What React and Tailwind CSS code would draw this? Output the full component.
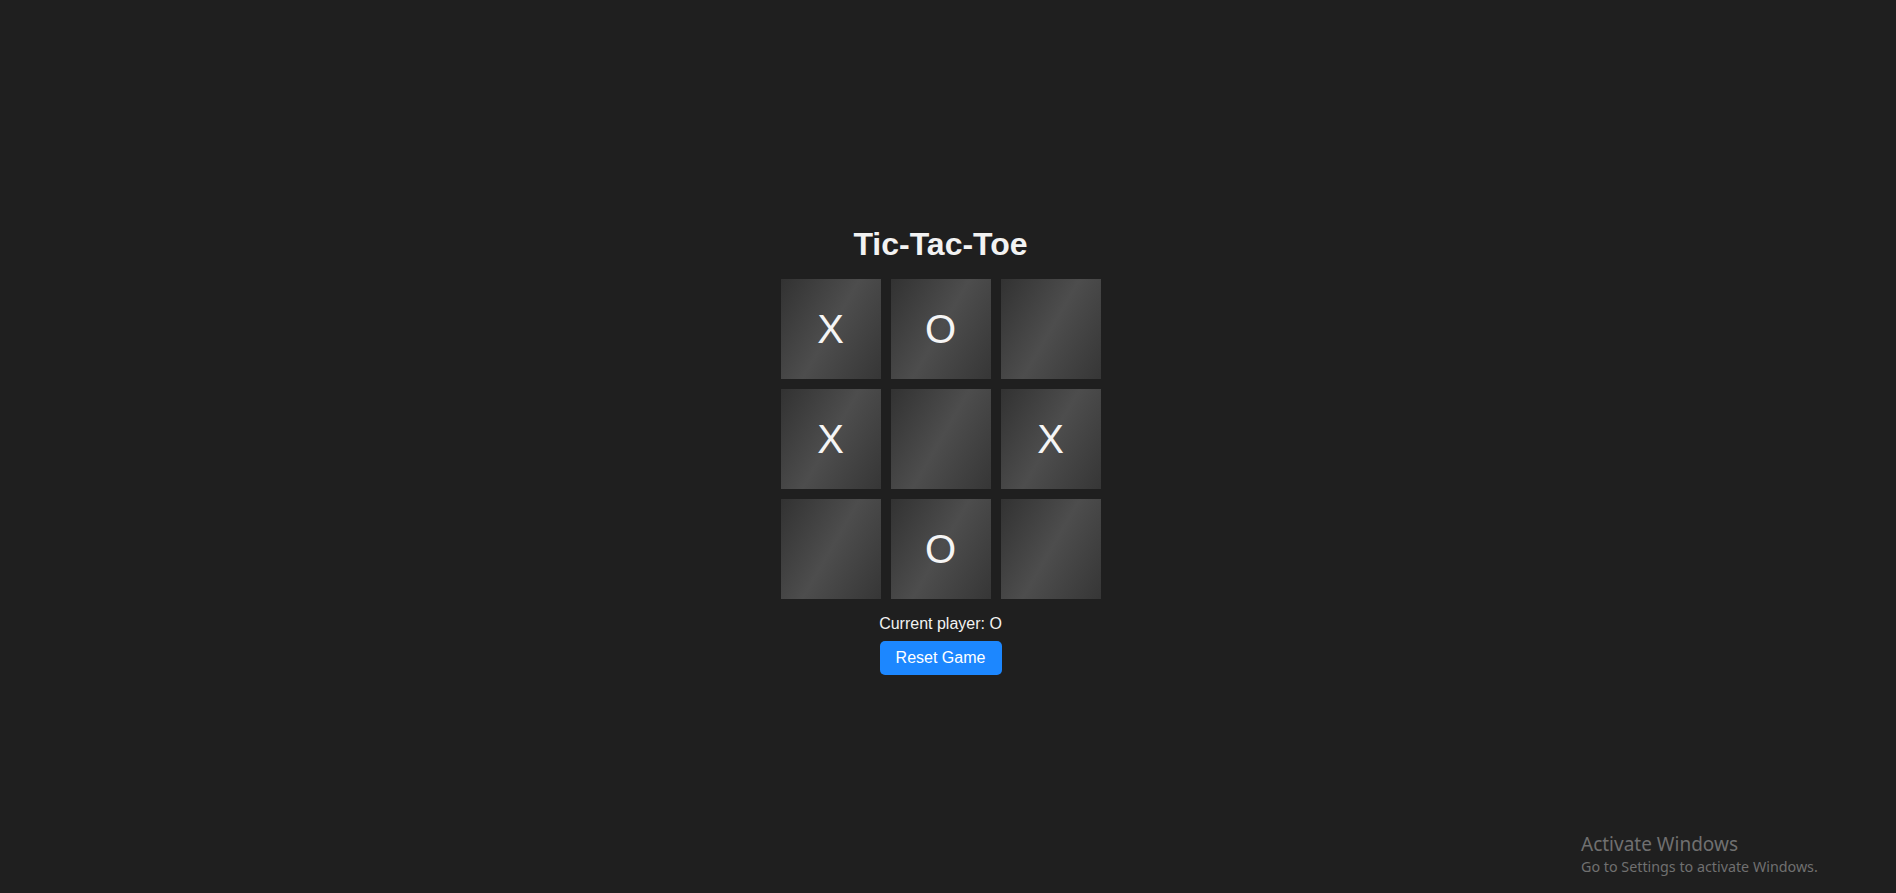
import { useState } from 'react';

const start = ['X', 'O', '', 'X', '', 'X', '', 'O', ''];

export default function App() {
  const [board, setBoard] = useState(start);
  const [player, setPlayer] = useState('O');

  const play = (i) => {
    if (board[i]) return;
    const next = board.slice();
    next[i] = player;
    setBoard(next);
    setPlayer(player === 'X' ? 'O' : 'X');
  };

  const reset = () => {
    setBoard(Array(9).fill(''));
    setPlayer('X');
  };

  return (
    <div className="relative min-h-[893px] w-full bg-[#1f1f1f] font-['Liberation_Sans',Arial,sans-serif] text-[#f2f2f2] overflow-hidden">
      <div className="flex flex-col items-center pr-[15px] pt-[226px]">
        <h1 className="text-[32px] font-bold leading-[37px] m-0">Tic-Tac-Toe</h1>
        <div className="mt-[16px] grid grid-cols-[repeat(3,100px)] gap-[10px]">
          {board.map((v, i) => (
            <button
              key={i}
              onClick={() => play(i)}
              className="w-[100px] h-[100px] flex items-center justify-center text-[40px] leading-none text-[#f5f5f5] bg-[linear-gradient(120deg,#323232_0%,#4d4d4d_50%,#363636_100%)] cursor-pointer"
            >
              {v}
            </button>
          ))}
        </div>
        <p className="mt-[16px] text-base leading-[18px]">Current player: {player}</p>
        <button
          onClick={reset}
          className="mt-[8px] w-[122px] h-[34px] rounded-[5px] bg-[#1c87ff] text-white text-base cursor-pointer"
        >
          Reset Game
        </button>
      </div>

      <div className="absolute left-[1581px] top-[833px] text-[#707070] font-['Noto_Sans','Open_Sans',sans-serif] pointer-events-none select-none">
        <div className="text-[19px] leading-[23px]">Activate Windows</div>
        <div className="text-[14.3px] leading-[20px] mt-[1px]">Go to Settings to activate Windows.</div>
      </div>
    </div>
  );
}
